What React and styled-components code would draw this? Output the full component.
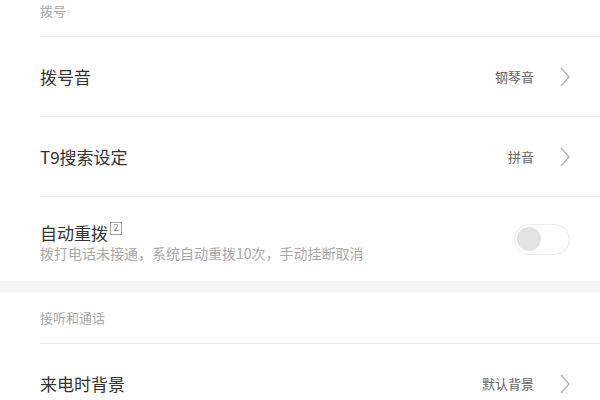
import React from "react"
import styled, { createGlobalStyle } from "styled-components"

const GlobalStyle = createGlobalStyle`
  html, body {
    margin: 0;
    padding: 0;
    background: #ffffff;
    font-family: "Noto Sans CJK SC", "Noto Sans", sans-serif;
    overflow: hidden;
  }
`

const Page = styled.div`
  width: 600px;
  height: 400px;
  overflow: hidden;
  background: #ffffff;
`

const List = styled.div`
  margin-top: -14px;
`

const Section = styled.div`
  padding-left: 40px;
`

const Header = styled.div`
  height: 51px;
  display: flex;
  align-items: center;
  padding-bottom: 1px;
  font-size: 13px;
  color: #a8a8a8;
  border-bottom: 1px solid #ededed;
  box-sizing: border-box;
`

const Row = styled.div`
  height: ${props => (props.tall ? "84px" : "80px")};
  display: flex;
  align-items: center;
  padding-right: 30px;
  box-sizing: border-box;
  border-bottom: ${props => (props.last ? "none" : "1px solid #ededed")};
`

const Text = styled.div`
  flex: 1;
  display: flex;
  flex-direction: column;
  gap: 1px;
  padding-top: ${props => (props.offset ? "6px" : "0")};
`

const Title = styled.div`
  font-size: 17px;
  color: #333333;
  line-height: 21px;
  display: flex;
  align-items: flex-start;
`

const Badge = styled.span`
  margin-left: 2px;
  width: 10px;
  height: 11px;
  border: 1px solid #a0a0a0;
  font-size: 9px;
  line-height: 11px;
  text-align: center;
  color: #888;
  font-family: "DejaVu Sans", sans-serif;
`

const Sub = styled.div`
  font-size: 14px;
  color: #a9a9a9;
  line-height: 18px;
`

const Value = styled.div`
  font-size: 13px;
  color: #666666;
  margin-right: 26px;
`

const Chevron = () => (
  <svg width="10" height="20" viewBox="0 0 10 20">
    <polyline
      points="1,1 9,10 1,19"
      fill="none"
      stroke="#b4b4b4"
      strokeWidth="1.4"
    />
  </svg>
)

const Switch = styled.div`
  width: 56px;
  height: 31px;
  border: 1.5px solid #ececec;
  border-radius: 16px;
  box-sizing: border-box;
  display: flex;
  align-items: center;
  padding-left: 2px;
`

const Knob = styled.div`
  width: 24px;
  height: 24px;
  border-radius: 50%;
  background: #e3e3e3;
`

const Band = styled.div`
  height: 12px;
  background: #f5f5f5;
`

const NavRow = ({ title, value }) => (
  <Row>
    <Text>
      <Title>{title}</Title>
    </Text>
    <Value>{value}</Value>
    <Chevron />
  </Row>
)

const App = () => {
  return (
    <Page>
      <GlobalStyle />
      <List>
        <Section>
          <Header>拨号</Header>
          <NavRow title="拨号音" value="钢琴音" />
          <NavRow title="T9搜索设定" value="拼音" />
          <Row tall last>
            <Text offset>
              <Title>
                自动重拨<Badge>2</Badge>
              </Title>
              <Sub>拨打电话未接通，系统自动重拨10次，手动挂断取消</Sub>
            </Text>
            <Switch>
              <Knob />
            </Switch>
          </Row>
        </Section>
        <Band />
        <Section>
          <Header>接听和通话</Header>
          <NavRow title="来电时背景" value="默认背景" />
        </Section>
      </List>
    </Page>
  )
}

export default App
